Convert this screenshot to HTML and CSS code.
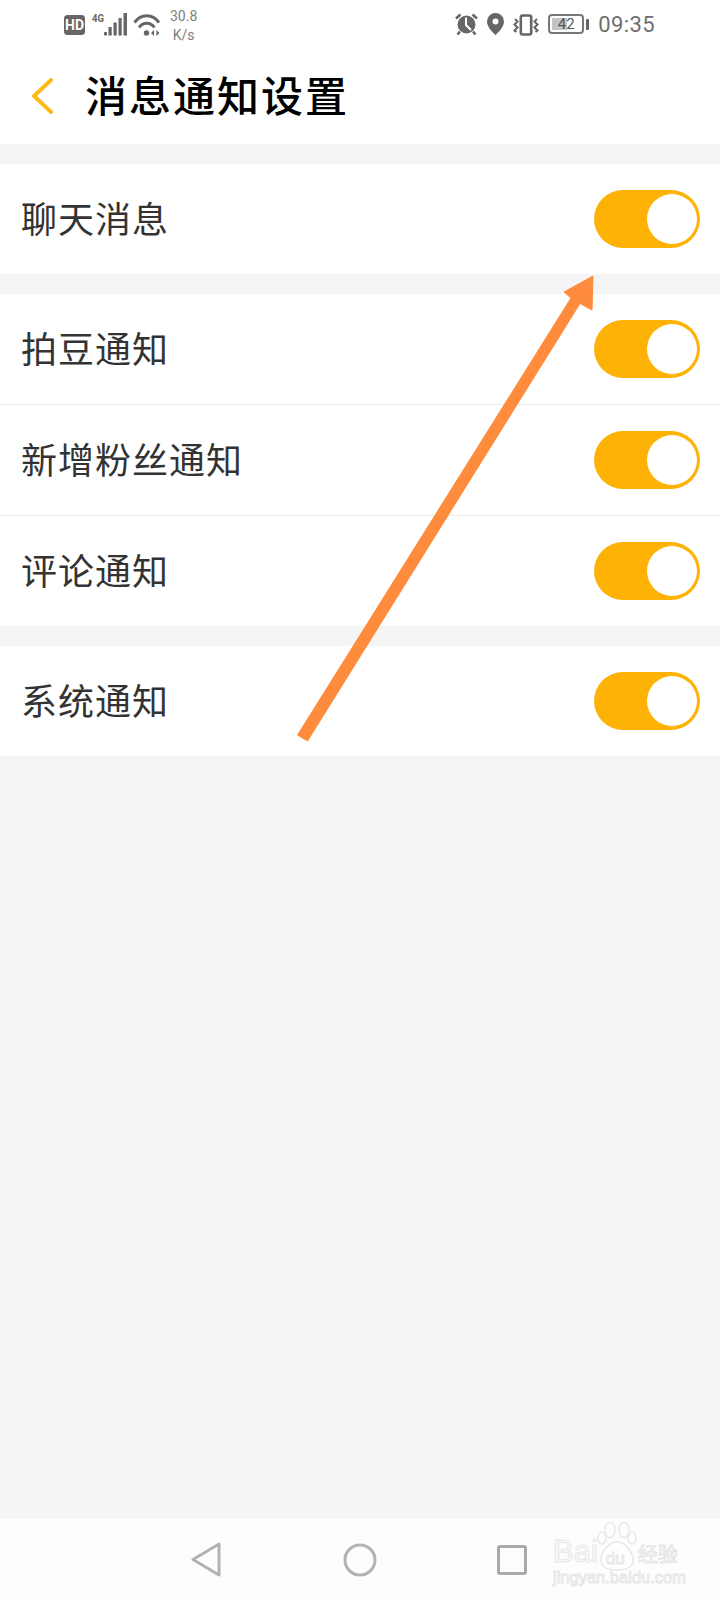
FILE: index.html
```html
<!DOCTYPE html>
<html lang="zh-CN">
<head>
<meta charset="utf-8">
<title>消息通知设置</title>
<link rel="stylesheet" href="styles.css">
</head>
<body>
<div class="screen">
  <header class="topbar">
    <div class="status">
      <div class="status-left">
        <svg class="ic-hd" width="21" height="20" viewBox="0 0 21 20"><rect width="21" height="20" rx="3.500" fill="#666"/><text x="10.500" y="14.800" class="hd-text">HD</text></svg>
        <svg class="ic-signal" width="36" height="23" viewBox="0 0 36 23"><text x="0" y="9" class="g-text" textLength="12" lengthAdjust="spacingAndGlyphs">4G</text><g fill="#666"><rect x="12" y="19" width="3" height="3.500" rx="1"/><rect x="16.500" y="14" width="3.200" height="8.500"/><rect x="21.500" y="9.500" width="3.200" height="13"/><rect x="26.500" y="5" width="3.200" height="17.500"/><rect x="31.500" y="0" width="3.500" height="22.500"/></g></svg>
        <svg class="ic-wifi" width="28" height="23" viewBox="0 0 28 23"><g fill="none" stroke="#666" stroke-width="3"><path d="M1.500 9.500C8 .5 19.500 .5 26 9.500"/><path d="M6 14.500C10 8.800 17.500 8.800 21.500 14.500"/></g><circle cx="13.500" cy="20" r="2.700" fill="#666"/><path d="M21 17l-3 3 3 3zM23.500 17l3 3-3 3z" fill="#666"/></svg>
        <div class="speed"><span>30.8</span><span>K/s</span></div>
      </div>
      <div class="status-right">
        <svg class="ic-alarm" width="23" height="22" viewBox="0 0 23 22"><circle cx="11.500" cy="11.500" r="9" fill="#666"/><path d="M11 4.500v7.500l5 5" fill="none" stroke="#fff" stroke-width="2"/><path d="M1 5.500L5.500 1.500M22 5.500L17.500 1.500M5 18.500l-2.500 3M18 18.500l2.500 3" stroke="#666" stroke-width="2.600" fill="none"/></svg>
        <svg class="ic-pin" width="17" height="22" viewBox="0 0 17 22"><path fill-rule="evenodd" d="M8.500 0a8.500 8.500 0 0 1 8.500 8.500c0 5-5 10.500-8.500 13.500C5 19 0 13.500 0 8.500A8.500 8.500 0 0 1 8.500 0zm0 5.500a3 3 0 1 0 0 6 3 3 0 0 0 0-6z" fill="#666"/></svg>
        <svg class="ic-vib" width="27" height="22" viewBox="0 0 27 22"><rect x="7.800" y="1.500" width="10.400" height="19" rx="2" fill="none" stroke="#666" stroke-width="2.600"/><path d="M2 5l2.500 2.500-3 3 3 3-3 3 2 1.500M24 5l-2.500 2.500 3 3-3 3 3 3-2 1.500" fill="none" stroke="#666" stroke-width="2"/></svg>
        <div class="battery"><div class="cell"><div class="level"></div><span class="pct">42</span></div><div class="nub"></div></div>
        <span class="time">09:35</span>
      </div>
    </div>
    <div class="titlebar">
      <svg class="back" width="22" height="36" viewBox="0 0 22 36"><path d="M20 2L3 18l17 16" fill="none" stroke="#fdb913" stroke-width="3.800" stroke-linecap="round" stroke-linejoin="round"/></svg>
      <h1 class="title">消息通知设置</h1>
    </div>
  </header>

  <main class="content">
    <section class="group">
      <div class="row"><span class="label">聊天消息</span><span class="toggle"><i class="knob"></i></span></div>
    </section>
    <section class="group">
      <div class="row"><span class="label">拍豆通知</span><span class="toggle"><i class="knob"></i></span></div>
      <div class="row"><span class="label">新增粉丝通知</span><span class="toggle"><i class="knob"></i></span></div>
      <div class="row"><span class="label">评论通知</span><span class="toggle"><i class="knob"></i></span></div>
    </section>
    <section class="group">
      <div class="row"><span class="label">系统通知</span><span class="toggle"><i class="knob"></i></span></div>
    </section>
  </main>

  <nav class="navbar">
    <svg width="30" height="35" viewBox="0 0 30 35"><path d="M28 2L2 17.500 28 33z" fill="none" stroke="#b2b2b2" stroke-width="3" stroke-linejoin="round"/></svg>
    <svg width="34" height="34" viewBox="0 0 34 34"><circle cx="17" cy="17" r="15" fill="none" stroke="#b2b2b2" stroke-width="3"/></svg>
    <svg width="30" height="30" viewBox="0 0 30 30"><rect x="1.500" y="1.500" width="27" height="27" rx="1.500" fill="none" stroke="#aaa" stroke-width="3"/></svg>
  </nav>

  <svg class="arrow" width="720" height="1600" viewBox="0 0 720 1600"><path d="M297.500 735L571 298 564 292 593 276 592 310 580 303.500 307.500 741z" fill="#ff8c3c" stroke="#ff8c3c" stroke-width="1" stroke-linejoin="round"/></svg>

  <div class="watermark">
    <svg class="paw" width="42" height="50" viewBox="0 0 42 50"><g fill="#fefefe" stroke="#e8e8e8" stroke-width="1.500"><ellipse cx="6" cy="16" rx="4" ry="6"/><ellipse cx="14" cy="8" rx="5" ry="7.500"/><ellipse cx="28" cy="8" rx="5" ry="7.500"/><ellipse cx="36" cy="16" rx="4" ry="6"/><path d="M21 20c7 0 16 9 16 18 0 8-7 10-16 10S5 46 5 38c0-9 9-18 16-18z"/></g></svg>
    <div class="wm-line"><span class="wm-bai">Bai</span><span class="wm-du">du</span><span class="wm-cn">经验</span></div>
    <div class="wm-url">jingyan.baidu.com</div>
  </div>
</div>
</body>
</html>
```
FILE: styles.css
```css
* { box-sizing: border-box; }
html, body { margin: 0; padding: 0; }
body { font-family: "Noto Sans CJK SC", "Noto Sans", sans-serif; }

.screen {
  position: relative;
  width: 720px;
  height: 1600px;
  display: flex;
  flex-direction: column;
  background: #f5f5f5;
  overflow: hidden;
}

.topbar { height: 144px; background: #fff; flex: none; }

.status {
  height: 50px;
  display: flex;
  justify-content: space-between;
  align-items: flex-start;
  padding: 13px 65px 0 64px;
}
.status-left, .status-right { display: flex; align-items: flex-start; }
.ic-hd { margin-top: 2px; }
.ic-signal { margin-left: 7px; }
.ic-wifi { margin-left: 5px; }
.hd-text { font: 700 14px "Roboto", sans-serif; fill: #fff; text-anchor: middle; }
.g-text { font: 700 11px "Roboto", sans-serif; fill: #666; }

.speed {
  display: flex;
  flex-direction: column;
  align-items: center;
  margin: -6px 0 0 9px;
  font: 14px/19px "Roboto", sans-serif;
  color: #808080;
}

.ic-pin { margin-left: 9px; }
.ic-vib { margin-left: 9px; margin-top: 1px; }

.battery { display: flex; align-items: center; margin-left: 8px; margin-top: 1px; }
.cell {
  position: relative;
  width: 36px;
  height: 20px;
  border: 2px solid #777;
  border-radius: 4px;
  display: flex;
  align-items: center;
  justify-content: center;
}
.level { position: absolute; left: 2px; top: 2px; bottom: 2px; width: 15px; background: #c4c4c4; }
.pct { position: relative; font: 15px/16px "Roboto", sans-serif; color: #555; }
.nub { width: 3px; height: 11px; margin-left: 2px; background: #666; border-radius: 1px; }

.time { margin: -1px 0 0 9px; font: 22px/26px "Roboto", sans-serif; letter-spacing: 0.4px; color: #6e6e6e; }

.titlebar { height: 94px; display: flex; align-items: center; padding: 0 0 6px 31px; }
.back { flex: none; margin-top: 4px; }
.title {
  margin: 0 0 0 32px;
  font-size: 42px;
  line-height: 60px;
  font-weight: 500;
  letter-spacing: 2px;
  color: #000;
}

.content { flex: 1; padding-top: 20px; display: flex; flex-direction: column; gap: 20px; }
.group { background: #fff; }
.row {
  height: 111px;
  display: flex;
  align-items: center;
  justify-content: space-between;
  padding: 0 20px 0 21px;
  border-bottom: 1px solid #ececec;
}
.row:last-child { border-bottom: 0; height: 110px; }
.label { font-size: 36px; line-height: 50px; letter-spacing: 1px; color: #333; margin-top: -4px; }

.toggle {
  display: flex;
  align-items: center;
  justify-content: flex-end;
  width: 106px;
  height: 58px;
  padding-right: 3px;
  border-radius: 29px;
  background: #fdb205;
}
.knob { display: block; width: 50px; height: 50px; border-radius: 50%; background: #fff; }

.navbar {
  flex: none;
  height: 81px;
  background: #fdfdfd;
  display: flex;
  align-items: center;
  padding: 0 0 0 191px;
  gap: 122px;
}
.navbar svg:nth-child(3) { margin-left: -2px; }

.arrow { position: absolute; left: 0; top: 0; pointer-events: none; }

.watermark {
  position: absolute;
  left: 552px;
  top: 1522px;
  width: 130px;
  height: 66px;
  color: #fdfdfd;
  -webkit-text-stroke: 1px #e6e6e6;
}
.paw { position: absolute; left: 44px; top: 0; }
.wm-line { position: absolute; left: 1px; top: 13px; display: flex; align-items: baseline; font: 400 31px/34px "Liberation Sans", sans-serif; }
.wm-du { position: relative; top: 2px; font-size: 17px; margin-left: 8px; }
.wm-cn { font: 400 20px/34px "Noto Sans CJK SC", sans-serif; margin-left: 13px; }
.wm-url { position: absolute; left: 1px; top: 45px; font: 400 16.500px/20px "Liberation Sans", sans-serif; white-space: nowrap; }
```
